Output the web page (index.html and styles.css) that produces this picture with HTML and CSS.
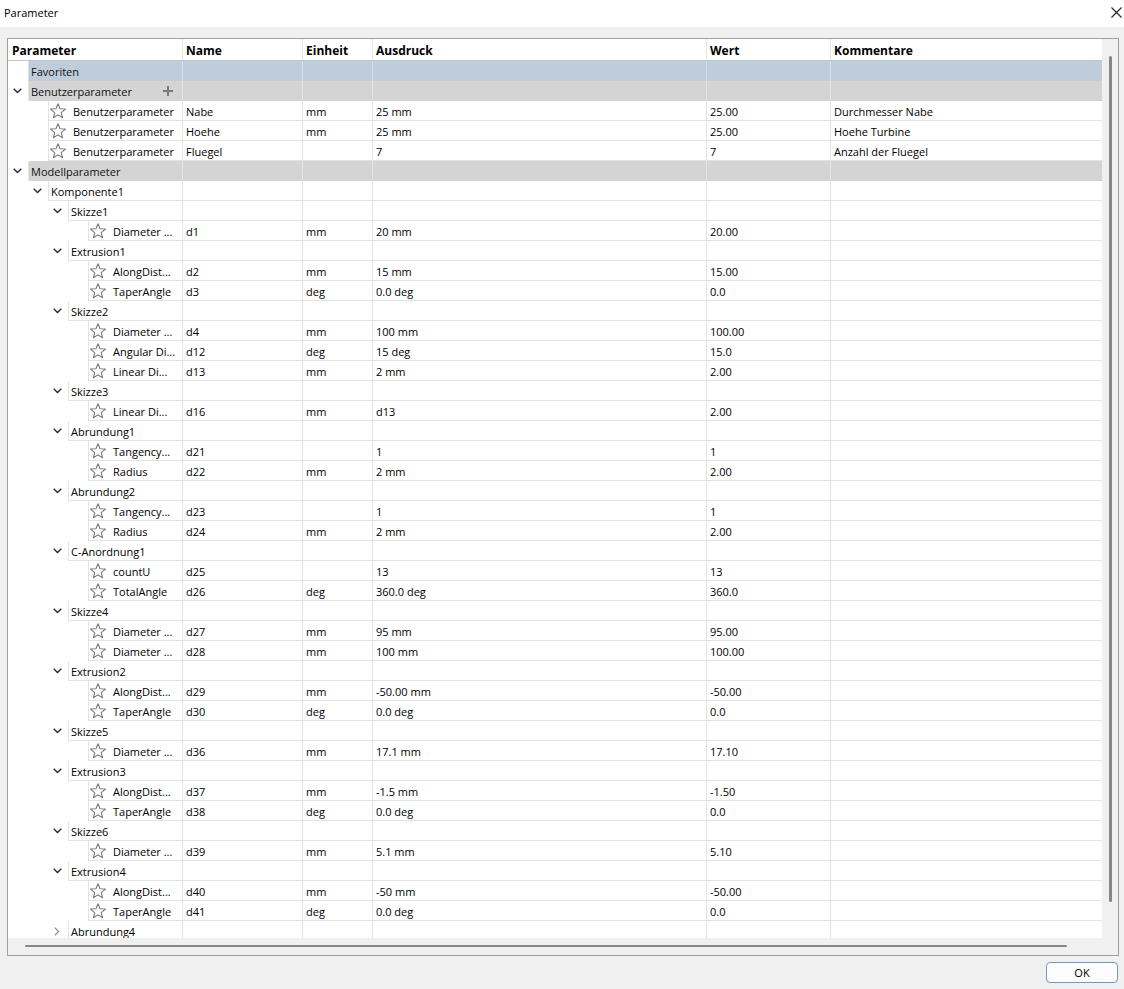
FILE: index.html
```html
<!DOCTYPE html>
<html lang="de">
<head>
<meta charset="utf-8">
<title>Parameter</title>
<link rel="stylesheet" href="styles.css">
</head>
<body>
<svg class="defs" width="0" height="0" aria-hidden="true">
  <defs>
    <symbol id="star" viewBox="0 0 16 16">
      <path d="M8 0.7 L10.02 5.72 L15.42 6.08 L11.27 9.56 L12.59 14.81 L8 11.93 L3.41 14.81 L4.73 9.56 L0.58 6.08 L5.98 5.72 Z" fill="none" stroke="#767676" stroke-width="1.05" stroke-linejoin="round"/>
    </symbol>
    <symbol id="down" viewBox="0 0 9 6">
      <path d="M0.7 0.8 L4.5 4.6 L8.3 0.8" fill="none" stroke="#2b2b2b" stroke-width="1.4"/>
    </symbol>
    <symbol id="right" viewBox="0 0 6 9">
      <path d="M0.8 0.7 L4.6 4.5 L0.8 8.3" fill="none" stroke="#8a8a8a" stroke-width="1.2"/>
    </symbol>
  </defs>
</svg>

<div class="titlebar">
  <span class="title">Parameter</span>
  <svg class="close" viewBox="0 0 11 11"><path d="M0.5 0.5 L10.5 10.5 M10.5 0.5 L0.5 10.5" stroke="#222" stroke-width="1.1" fill="none"/></svg>
</div>

<div class="main">
  <div class="frame">
    <div class="table">
      <div class="head">
        <div class="h h0">Parameter</div>
        <div class="h">Name</div>
        <div class="h">Einheit</div>
        <div class="h">Ausdruck</div>
        <div class="h">Wert</div>
        <div class="h">Kommentare</div>
      </div>

      <div class="row fav"><div class="c0 l0"><span class="tw"></span><div class="in">Favoriten</div></div><div class="c"></div><div class="c"></div><div class="c"></div><div class="c"></div><div class="c"></div></div>

      <div class="row grp"><div class="c0 l0"><span class="tw"><svg class="chev"><use href="#down"/></svg></span><div class="in">Benutzerparameter<svg class="plus" viewBox="0 0 10 10"><path d="M5 0 V10 M0 5 H10" stroke="#7a7a7a" stroke-width="2"/></svg></div></div><div class="c"></div><div class="c"></div><div class="c"></div><div class="c"></div><div class="c"></div></div>

      <div class="row leaf"><div class="c0 l1"><span class="tw"></span><div class="in"><svg class="star"><use href="#star"/></svg>Benutzerparameter</div></div><div class="c">Nabe</div><div class="c">mm</div><div class="c">25 mm</div><div class="c">25.00</div><div class="c">Durchmesser Nabe</div></div>
      <div class="row leaf"><div class="c0 l1"><span class="tw"></span><div class="in"><svg class="star"><use href="#star"/></svg>Benutzerparameter</div></div><div class="c">Hoehe</div><div class="c">mm</div><div class="c">25 mm</div><div class="c">25.00</div><div class="c">Hoehe Turbine</div></div>
      <div class="row leaf"><div class="c0 l1"><span class="tw"></span><div class="in"><svg class="star"><use href="#star"/></svg>Benutzerparameter</div></div><div class="c">Fluegel</div><div class="c"></div><div class="c">7</div><div class="c">7</div><div class="c">Anzahl der Fluegel</div></div>

      <div class="row grp"><div class="c0 l0"><span class="tw"><svg class="chev"><use href="#down"/></svg></span><div class="in">Modellparameter</div></div><div class="c"></div><div class="c"></div><div class="c"></div><div class="c"></div><div class="c"></div></div>

      <div class="row"><div class="c0 l1"><span class="tw"><svg class="chev"><use href="#down"/></svg></span><div class="in">Komponente1</div></div><div class="c"></div><div class="c"></div><div class="c"></div><div class="c"></div><div class="c"></div></div>

      <div class="row"><div class="c0 l2"><span class="tw"><svg class="chev"><use href="#down"/></svg></span><div class="in">Skizze1</div></div><div class="c"></div><div class="c"></div><div class="c"></div><div class="c"></div><div class="c"></div></div>
      <div class="row leaf"><div class="c0 l3"><span class="tw"></span><div class="in"><svg class="star"><use href="#star"/></svg>Diameter ...</div></div><div class="c">d1</div><div class="c">mm</div><div class="c">20 mm</div><div class="c">20.00</div><div class="c"></div></div>

      <div class="row"><div class="c0 l2"><span class="tw"><svg class="chev"><use href="#down"/></svg></span><div class="in">Extrusion1</div></div><div class="c"></div><div class="c"></div><div class="c"></div><div class="c"></div><div class="c"></div></div>
      <div class="row leaf"><div class="c0 l3"><span class="tw"></span><div class="in"><svg class="star"><use href="#star"/></svg>AlongDist...</div></div><div class="c">d2</div><div class="c">mm</div><div class="c">15 mm</div><div class="c">15.00</div><div class="c"></div></div>
      <div class="row leaf"><div class="c0 l3"><span class="tw"></span><div class="in"><svg class="star"><use href="#star"/></svg>TaperAngle</div></div><div class="c">d3</div><div class="c">deg</div><div class="c">0.0 deg</div><div class="c">0.0</div><div class="c"></div></div>

      <div class="row"><div class="c0 l2"><span class="tw"><svg class="chev"><use href="#down"/></svg></span><div class="in">Skizze2</div></div><div class="c"></div><div class="c"></div><div class="c"></div><div class="c"></div><div class="c"></div></div>
      <div class="row leaf"><div class="c0 l3"><span class="tw"></span><div class="in"><svg class="star"><use href="#star"/></svg>Diameter ...</div></div><div class="c">d4</div><div class="c">mm</div><div class="c">100 mm</div><div class="c">100.00</div><div class="c"></div></div>
      <div class="row leaf"><div class="c0 l3"><span class="tw"></span><div class="in"><svg class="star"><use href="#star"/></svg>Angular Di...</div></div><div class="c">d12</div><div class="c">deg</div><div class="c">15 deg</div><div class="c">15.0</div><div class="c"></div></div>
      <div class="row leaf"><div class="c0 l3"><span class="tw"></span><div class="in"><svg class="star"><use href="#star"/></svg>Linear Di...</div></div><div class="c">d13</div><div class="c">mm</div><div class="c">2 mm</div><div class="c">2.00</div><div class="c"></div></div>

      <div class="row"><div class="c0 l2"><span class="tw"><svg class="chev"><use href="#down"/></svg></span><div class="in">Skizze3</div></div><div class="c"></div><div class="c"></div><div class="c"></div><div class="c"></div><div class="c"></div></div>
      <div class="row leaf"><div class="c0 l3"><span class="tw"></span><div class="in"><svg class="star"><use href="#star"/></svg>Linear Di...</div></div><div class="c">d16</div><div class="c">mm</div><div class="c">d13</div><div class="c">2.00</div><div class="c"></div></div>

      <div class="row"><div class="c0 l2"><span class="tw"><svg class="chev"><use href="#down"/></svg></span><div class="in">Abrundung1</div></div><div class="c"></div><div class="c"></div><div class="c"></div><div class="c"></div><div class="c"></div></div>
      <div class="row leaf"><div class="c0 l3"><span class="tw"></span><div class="in"><svg class="star"><use href="#star"/></svg>Tangency...</div></div><div class="c">d21</div><div class="c"></div><div class="c">1</div><div class="c">1</div><div class="c"></div></div>
      <div class="row leaf"><div class="c0 l3"><span class="tw"></span><div class="in"><svg class="star"><use href="#star"/></svg>Radius</div></div><div class="c">d22</div><div class="c">mm</div><div class="c">2 mm</div><div class="c">2.00</div><div class="c"></div></div>

      <div class="row"><div class="c0 l2"><span class="tw"><svg class="chev"><use href="#down"/></svg></span><div class="in">Abrundung2</div></div><div class="c"></div><div class="c"></div><div class="c"></div><div class="c"></div><div class="c"></div></div>
      <div class="row leaf"><div class="c0 l3"><span class="tw"></span><div class="in"><svg class="star"><use href="#star"/></svg>Tangency...</div></div><div class="c">d23</div><div class="c"></div><div class="c">1</div><div class="c">1</div><div class="c"></div></div>
      <div class="row leaf"><div class="c0 l3"><span class="tw"></span><div class="in"><svg class="star"><use href="#star"/></svg>Radius</div></div><div class="c">d24</div><div class="c">mm</div><div class="c">2 mm</div><div class="c">2.00</div><div class="c"></div></div>

      <div class="row"><div class="c0 l2"><span class="tw"><svg class="chev"><use href="#down"/></svg></span><div class="in">C-Anordnung1</div></div><div class="c"></div><div class="c"></div><div class="c"></div><div class="c"></div><div class="c"></div></div>
      <div class="row leaf"><div class="c0 l3"><span class="tw"></span><div class="in"><svg class="star"><use href="#star"/></svg>countU</div></div><div class="c">d25</div><div class="c"></div><div class="c">13</div><div class="c">13</div><div class="c"></div></div>
      <div class="row leaf"><div class="c0 l3"><span class="tw"></span><div class="in"><svg class="star"><use href="#star"/></svg>TotalAngle</div></div><div class="c">d26</div><div class="c">deg</div><div class="c">360.0 deg</div><div class="c">360.0</div><div class="c"></div></div>

      <div class="row"><div class="c0 l2"><span class="tw"><svg class="chev"><use href="#down"/></svg></span><div class="in">Skizze4</div></div><div class="c"></div><div class="c"></div><div class="c"></div><div class="c"></div><div class="c"></div></div>
      <div class="row leaf"><div class="c0 l3"><span class="tw"></span><div class="in"><svg class="star"><use href="#star"/></svg>Diameter ...</div></div><div class="c">d27</div><div class="c">mm</div><div class="c">95 mm</div><div class="c">95.00</div><div class="c"></div></div>
      <div class="row leaf"><div class="c0 l3"><span class="tw"></span><div class="in"><svg class="star"><use href="#star"/></svg>Diameter ...</div></div><div class="c">d28</div><div class="c">mm</div><div class="c">100 mm</div><div class="c">100.00</div><div class="c"></div></div>

      <div class="row"><div class="c0 l2"><span class="tw"><svg class="chev"><use href="#down"/></svg></span><div class="in">Extrusion2</div></div><div class="c"></div><div class="c"></div><div class="c"></div><div class="c"></div><div class="c"></div></div>
      <div class="row leaf"><div class="c0 l3"><span class="tw"></span><div class="in"><svg class="star"><use href="#star"/></svg>AlongDist...</div></div><div class="c">d29</div><div class="c">mm</div><div class="c">-50.00 mm</div><div class="c">-50.00</div><div class="c"></div></div>
      <div class="row leaf"><div class="c0 l3"><span class="tw"></span><div class="in"><svg class="star"><use href="#star"/></svg>TaperAngle</div></div><div class="c">d30</div><div class="c">deg</div><div class="c">0.0 deg</div><div class="c">0.0</div><div class="c"></div></div>

      <div class="row"><div class="c0 l2"><span class="tw"><svg class="chev"><use href="#down"/></svg></span><div class="in">Skizze5</div></div><div class="c"></div><div class="c"></div><div class="c"></div><div class="c"></div><div class="c"></div></div>
      <div class="row leaf"><div class="c0 l3"><span class="tw"></span><div class="in"><svg class="star"><use href="#star"/></svg>Diameter ...</div></div><div class="c">d36</div><div class="c">mm</div><div class="c">17.1 mm</div><div class="c">17.10</div><div class="c"></div></div>

      <div class="row"><div class="c0 l2"><span class="tw"><svg class="chev"><use href="#down"/></svg></span><div class="in">Extrusion3</div></div><div class="c"></div><div class="c"></div><div class="c"></div><div class="c"></div><div class="c"></div></div>
      <div class="row leaf"><div class="c0 l3"><span class="tw"></span><div class="in"><svg class="star"><use href="#star"/></svg>AlongDist...</div></div><div class="c">d37</div><div class="c">mm</div><div class="c">-1.5 mm</div><div class="c">-1.50</div><div class="c"></div></div>
      <div class="row leaf"><div class="c0 l3"><span class="tw"></span><div class="in"><svg class="star"><use href="#star"/></svg>TaperAngle</div></div><div class="c">d38</div><div class="c">deg</div><div class="c">0.0 deg</div><div class="c">0.0</div><div class="c"></div></div>

      <div class="row"><div class="c0 l2"><span class="tw"><svg class="chev"><use href="#down"/></svg></span><div class="in">Skizze6</div></div><div class="c"></div><div class="c"></div><div class="c"></div><div class="c"></div><div class="c"></div></div>
      <div class="row leaf"><div class="c0 l3"><span class="tw"></span><div class="in"><svg class="star"><use href="#star"/></svg>Diameter ...</div></div><div class="c">d39</div><div class="c">mm</div><div class="c">5.1 mm</div><div class="c">5.10</div><div class="c"></div></div>

      <div class="row"><div class="c0 l2"><span class="tw"><svg class="chev"><use href="#down"/></svg></span><div class="in">Extrusion4</div></div><div class="c"></div><div class="c"></div><div class="c"></div><div class="c"></div><div class="c"></div></div>
      <div class="row leaf"><div class="c0 l3"><span class="tw"></span><div class="in"><svg class="star"><use href="#star"/></svg>AlongDist...</div></div><div class="c">d40</div><div class="c">mm</div><div class="c">-50 mm</div><div class="c">-50.00</div><div class="c"></div></div>
      <div class="row leaf"><div class="c0 l3"><span class="tw"></span><div class="in"><svg class="star"><use href="#star"/></svg>TaperAngle</div></div><div class="c">d41</div><div class="c">deg</div><div class="c">0.0 deg</div><div class="c">0.0</div><div class="c"></div></div>

      <div class="row"><div class="c0 l2"><span class="tw"><svg class="chevr"><use href="#right"/></svg></span><div class="in">Abrundung4</div></div><div class="c"></div><div class="c"></div><div class="c"></div><div class="c"></div><div class="c"></div></div>
    </div>
    <div class="vscroll"><div class="vthumb"></div></div>
    <div class="hscroll"><div class="hthumb"></div></div>
  </div>
</div>

<div class="footer">
  <button class="ok">OK</button>
</div>
</body>
</html>
```

FILE: styles.css
```css
* { box-sizing: border-box; }
html, body { margin: 0; padding: 0; }
body {
  width: 1124px;
  height: 989px;
  overflow: hidden;
  background: #f0f0f0;
  font-family: "Segoe UI", "Open Sans", "Noto Sans", sans-serif;
  font-size: 11px;
  color: #000;
}
.defs { position: absolute; width: 0; height: 0; }

.titlebar {
  height: 27px;
  background: #fff;
  display: flex;
  align-items: center;
  justify-content: space-between;
  padding: 0 2px 0 4px;
}
.title { font-size: 11px; color: #000; margin-top: -2px; }
.close { width: 11px; height: 11px; margin-top: -3px; }

.main { padding: 11px 5px 0 7px; }
.frame {
  width: 1112px;
  height: 918px;
  border: 1px solid #a0a0a0;
  display: grid;
  grid-template-columns: 1094px 16px;
  grid-template-rows: 899px 17px;
  background: #fff;
}
.table { overflow: hidden; background: #fff; }

.vscroll { background: #f0f0f0; }
.vthumb {
  margin: 17px 0 0 7px;
  width: 3px;
  height: 846px;
  background: #868686;
  border-radius: 2px;
}
.hscroll { grid-column: 1 / 3; background: #f0f0f0; padding: 7px 0 0 17px; }
.hthumb { width: 1042px; height: 2px; background: #868686; border-radius: 1px; }

.head, .row {
  display: grid;
  grid-template-columns: 174px 120px 70px 334px 124px 272px;
}
.head {
  height: 22px;
  border-bottom: 1px solid #c4c4c4;
  font-weight: bold;
  font-size: 12px;
}
.h {
  display: flex;
  align-items: center;
  padding-left: 3px;
  padding-top: 1px;
  border-left: 1px solid #e6e6e6;
  white-space: nowrap;
}
.h0 { border-left: none; padding-left: 4px; }

.row { height: 20px; }
.c {
  display: flex;
  align-items: center;
  padding-left: 3px;
  padding-top: 1px;
  border-left: 1px solid #e3e3e3;
  border-bottom: 1px solid #e3e3e3;
  white-space: nowrap;
  overflow: hidden;
}
.c0 { display: flex; min-width: 0; }
.l1 { padding-left: 20px; }
.l2 { padding-left: 40px; }
.l3 { padding-left: 60px; }
.tw {
  width: 20px;
  flex: none;
  display: flex;
  align-items: center;
  padding-left: 5px;
}
.chev { width: 9px; height: 6px; }
.chevr { width: 6px; height: 9px; margin-left: 1px; }
.in {
  flex: 1;
  min-width: 0;
  display: flex;
  align-items: center;
  padding-left: 2px;
  padding-top: 1px;
  border-left: 1px solid #e3e3e3;
  border-bottom: 1px solid #e3e3e3;
  white-space: nowrap;
  overflow: hidden;
}
.leaf .in { padding-left: 1px; }
.star { width: 16px; height: 16px; flex: none; margin-right: 7px; margin-top: -1px; }
.plus { width: 10px; height: 10px; flex: none; margin-left: auto; margin-right: 9px; margin-top: -1px; }

.fav .in, .fav .c { background: #bfcdda; border-bottom-color: transparent; border-left-color: rgba(255,255,255,0.35); }
.grp .in, .grp .c { background: #d4d4d4; border-bottom-color: transparent; border-left-color: rgba(255,255,255,0.35); }
.fav .in, .grp .in { color: #111; }

.footer {
  display: flex;
  justify-content: flex-end;
  padding: 6px 6px 0 0;
}
.ok {
  width: 72px;
  height: 21px;
  border: 1px solid #6f9ac6;
  border-radius: 4px;
  background: #fdfdfd;
  font-family: "Segoe UI", "Open Sans", "Noto Sans", sans-serif;
  font-size: 11px;
  color: #000;
  padding: 0;
}
```
